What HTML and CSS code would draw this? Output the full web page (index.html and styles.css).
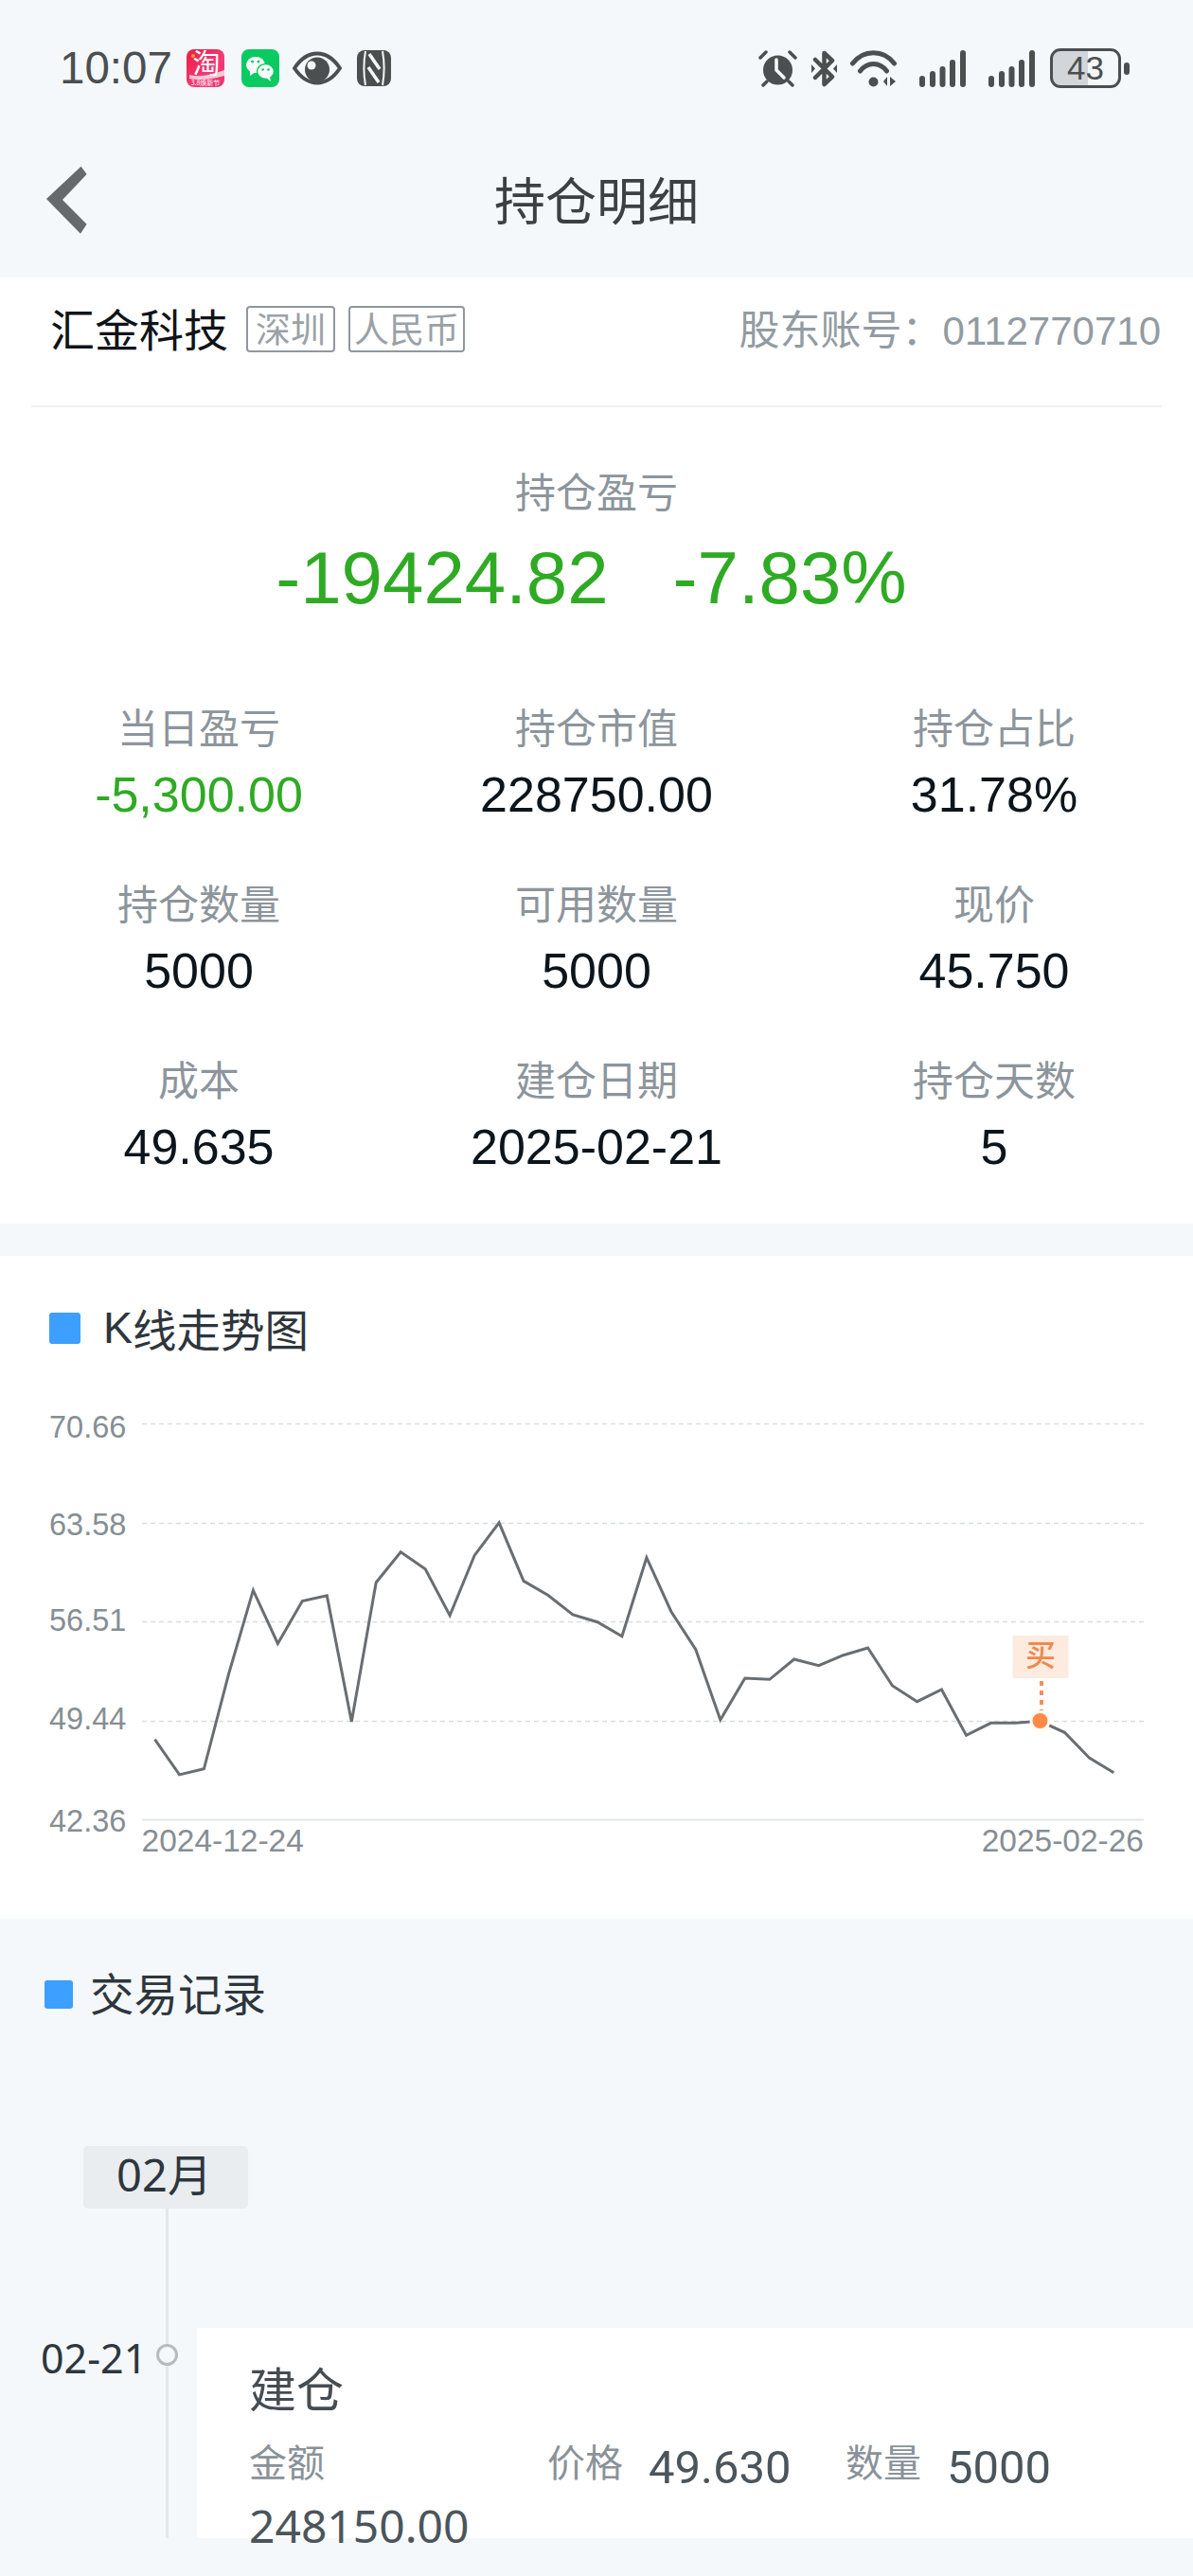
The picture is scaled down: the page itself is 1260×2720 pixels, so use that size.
FILE: index.html
```html
<!DOCTYPE html>
<html lang="zh-CN">
<head>
<meta charset="utf-8">
<title>持仓明细</title>
<link rel="stylesheet" href="styles.css">
</head>
<body>
<div class="page">
  <div class="status">
    <div class="status-left">
      <span class="time">10:07</span>
      <svg class="ic ic-tb" width="40" height="40" viewBox="0 0 40 40">
        <defs>
          <linearGradient id="tbg" x1="0" y1="0" x2="1" y2="1"><stop offset="0" stop-color="#EE1C3C"/><stop offset=".6" stop-color="#F23B78"/><stop offset="1" stop-color="#E93568"/></linearGradient>
        </defs>
        <rect width="40" height="40" rx="8" fill="url(#tbg)"/>
        <path d="M3 27 C14 30 26 27 40 22 V28 C26 32 14 33 3 31Z" fill="#F8C9D6"/>
        <circle cx="7" cy="7" r="2" fill="#F59A3A"/>
        <text class="tb-big" x="21" y="26" text-anchor="middle">淘</text>
        <text class="tb-small" x="20" y="38" text-anchor="middle">3.8焕新节</text>
      </svg>
      <svg class="ic ic-wx" width="40" height="40" viewBox="0 0 40 40">
        <rect width="40" height="40" rx="8" fill="#0ACB62"/>
        <ellipse cx="15" cy="16.500" rx="10" ry="8.500" fill="#fff"/>
        <path d="M9 22 L9 28 L15 24Z" fill="#fff"/>
        <ellipse cx="25.500" cy="23.500" rx="9" ry="8" fill="#fff" stroke="#0ACB62" stroke-width="1.500"/>
        <path d="M30 29 L31 34 L26 30Z" fill="#fff"/>
        <circle cx="11.500" cy="13" r="1.500" fill="#0ACB62"/><circle cx="18" cy="13" r="1.500" fill="#0ACB62"/>
        <circle cx="22.500" cy="21.500" r="1.300" fill="#0ACB62"/><circle cx="28.500" cy="21.500" r="1.300" fill="#0ACB62"/>
      </svg>
      <svg class="ic ic-eye" width="52" height="36" viewBox="0 0 52 36">
        <path d="M2 18 C10 6 18 2.500 26 2.500 S42 6 50 18 C42 30 34 33.500 26 33.500 S10 30 2 18Z" fill="none" stroke="#4B4F50" stroke-width="4"/>
        <circle cx="26" cy="19.500" r="13" fill="#4B4F50"/>
        <circle cx="20" cy="15" r="4.500" fill="#F4F8FB"/>
      </svg>
      <svg class="ic ic-nfc" width="36" height="38" viewBox="0 0 36 38">
        <rect width="36" height="38" rx="8" fill="#4B4F50"/>
        <path d="M9 1 C7 12 7 26 9 37 M27 1 C29 12 29 26 27 37" fill="none" stroke="#F4F8FB" stroke-width="2"/>
        <path d="M13 4 L24 20 M12 18 L23 34" fill="none" stroke="#F4F8FB" stroke-width="3.500"/>
      </svg>
    </div>
    <div class="status-right">
      <svg class="ic" width="41" height="39" viewBox="0 0 41 39">
        <circle cx="20.500" cy="21" r="15.500" fill="#4B4F50"/>
        <path d="M19 10 V21 L27 29" fill="none" stroke="#F4F8FB" stroke-width="3.600" stroke-linecap="round" stroke-linejoin="round"/>
        <path d="M2 8 L8 2 M33 2 L39 8 M5 37 L9 33 M36 37 L32 33" stroke="#4B4F50" stroke-width="3.500" stroke-linecap="round"/>
      </svg>
      <svg class="ic ic-bt" width="27" height="39" viewBox="0 0 27 39">
        <path d="M4 10 L22 28 L13.500 36 V3 L22 11 L4 29" fill="none" stroke="#4B4F50" stroke-width="4.500" stroke-linejoin="round" stroke-linecap="round"/>
        <path d="M0 15 L4 19.500 L0 24Z M27 15 L23 19.500 L27 24Z" fill="#4B4F50"/>
      </svg>
      <svg class="ic ic-wifi" width="49" height="39" viewBox="0 0 49 39">
        <path d="M2.500 14 C14 -1 35 -1 46.500 14 M10.500 22 C18 12 31 12 38.500 22" fill="none" stroke="#4B4F50" stroke-width="5" stroke-linecap="round"/>
        <circle cx="24.500" cy="33.500" r="5" fill="#4B4F50"/>
        <path d="M35 33 L39 28 V38Z M42 28 V38 L48 33Z" fill="#4B4F50"/>
      </svg>
      <svg class="ic ic-sig" width="49" height="39" viewBox="0 0 49 39">
        <rect x="0" y="27" width="6" height="12" rx="3" fill="#4B4F50"/>
        <rect x="11" y="22" width="6" height="17" rx="3" fill="#4B4F50"/>
        <rect x="21.500" y="17" width="6" height="22" rx="3" fill="#4B4F50"/>
        <rect x="32" y="10" width="6" height="29" rx="3" fill="#4B4F50"/>
        <rect x="43" y="0" width="6" height="39" rx="3" fill="#4B4F50"/>
      </svg>
      <svg class="ic ic-sig2" width="49" height="39" viewBox="0 0 49 39">
        <rect x="0" y="27" width="6" height="12" rx="3" fill="#4B4F50"/>
        <rect x="11" y="22" width="6" height="17" rx="3" fill="#4B4F50"/>
        <rect x="21.500" y="17" width="6" height="22" rx="3" fill="#4B4F50"/>
        <rect x="32" y="10" width="6" height="29" rx="3" fill="#4B4F50"/>
        <rect x="43" y="0" width="6" height="39" rx="3" fill="#4B4F50"/>
      </svg>
      <div class="battery">43</div>
      <div class="battery-nub"></div>
    </div>
  </div>

  <div class="nav">
    <svg class="back" width="43" height="72" viewBox="49 175 43 72">
      <polygon points="85.600,175.700 91.600,184 66,211 91.600,236.700 85,246.700 49,210" fill="#666A6C"/>
    </svg>
    <div class="nav-title">持仓明细</div>
  </div>

  <section class="info">
    <div class="head">
      <span class="name">汇金科技</span>
      <span class="tag">深圳</span>
      <span class="tag">人民币</span>
      <span class="account">股东账号：<span class="account-no">0112770710</span></span>
    </div>
    <div class="hero">
      <div class="label">持仓盈亏</div>
      <div class="hero-values"><span>-19424.82</span><span>-7.83%</span></div>
    </div>
    <div class="stats">
      <div class="stat"><div class="label">当日盈亏</div><div class="value value-down">-5,300.00</div></div>
      <div class="stat"><div class="label">持仓市值</div><div class="value">228750.00</div></div>
      <div class="stat"><div class="label">持仓占比</div><div class="value">31.78%</div></div>
      <div class="stat"><div class="label">持仓数量</div><div class="value">5000</div></div>
      <div class="stat"><div class="label">可用数量</div><div class="value">5000</div></div>
      <div class="stat"><div class="label">现价</div><div class="value">45.750</div></div>
      <div class="stat"><div class="label">成本</div><div class="value">49.635</div></div>
      <div class="stat"><div class="label">建仓日期</div><div class="value">2025-02-21</div></div>
      <div class="stat"><div class="label">持仓天数</div><div class="value">5</div></div>
    </div>
  </section>

  <section class="chart-card">
    <div class="section-title chart-title"><i class="mark mark-lg"></i><span class="title-k">K</span><span>线走势图</span></div>
    <svg class="chart" width="1260" height="566" viewBox="0 1460 1260 566">
      <g class="grid">
        <line x1="150" y1="1503.500" x2="1208" y2="1503.500"/>
        <line x1="150" y1="1608.500" x2="1208" y2="1608.500"/>
        <line x1="150" y1="1712.500" x2="1208" y2="1712.500"/>
        <line x1="150" y1="1817.500" x2="1208" y2="1817.500"/>
      </g>
      <line class="axis" x1="150" y1="1921.500" x2="1208" y2="1921.500"/>
      <g class="y-labels">
        <text x="52" y="1518">70.66</text>
        <text x="52" y="1621">63.58</text>
        <text x="52" y="1722">56.51</text>
        <text x="52" y="1826">49.44</text>
        <text x="52" y="1934">42.36</text>
      </g>
      <text class="x-label" x="149.500" y="1955">2024-12-24</text>
      <text class="x-label" x="1208" y="1955" text-anchor="end">2025-02-26</text>
      <polyline class="price" points="163.500,1836.700 189.500,1873.900 215.400,1867.800 241.400,1768 267.400,1679.200 293.400,1735.500 319.300,1690.600 345.300,1684.900 371.300,1818 397.200,1671 423.200,1638.800 449.200,1656.700 475.100,1705.700 501.100,1642.400 527.100,1607.800 553,1669.400 579,1684.500 605,1704.900 631,1712.700 656.900,1727.700 682.900,1644.700 708.900,1701.700 734.800,1741.700 760.800,1816 786.800,1772 812.800,1773.300 838.700,1752 864.700,1758.700 890.700,1747.700 916.600,1740 942.600,1780 968.600,1796.700 994.500,1784 1020.500,1832.300 1046.500,1819.300 1072.500,1819.300 1098.400,1817.300 1124.400,1829.300 1150.400,1856 1176.300,1871.700"/>
      <rect class="buy-box" x="1069.500" y="1727" width="59" height="45"/>
      <text class="buy-text" x="1099" y="1758.500" text-anchor="middle">买</text>
      <line class="buy-stem" x1="1100" y1="1775" x2="1100" y2="1806"/>
      <circle class="buy-dot" cx="1098.500" cy="1817" r="9.500"/>
    </svg>
  </section>

  <section class="trades">
    <div class="section-title trades-title"><i class="mark"></i><span>交易记录</span></div>
    <div class="month">02月</div>
    <div class="tl-row">
      <div class="tl-date">02-21</div>
      <div class="tl-axis"><i class="tl-dot"></i></div>
      <div class="trade-card">
        <div class="trade-type">建仓</div>
        <div class="trade-cols">
          <div class="trade-col trade-col-stack">
            <span class="trade-label">金额</span>
            <span class="trade-amount">248150.00</span>
          </div>
          <div class="trade-col">
            <span class="trade-label">价格</span>
            <span class="trade-num">49.630</span>
          </div>
          <div class="trade-col">
            <span class="trade-label">数量</span>
            <span class="trade-num">5000</span>
          </div>
        </div>
      </div>
    </div>
  </section>
</div>
</body>
</html>
```
FILE: styles.css
```css
* { box-sizing: border-box; }
html, body { margin: 0; padding: 0; }
body {
  background: #F4F8FB;
  font-family: "Noto Sans CJK SC", sans-serif;
  overflow: hidden;
}
.page { width: 1260px; height: 2720px; overflow: hidden; }
.ic { display: block; flex: none; }

/* status bar */
.status {
  height: 132px;
  padding: 12px 67px 0 63px;
  display: flex;
  align-items: center;
  justify-content: space-between;
}
.status-left, .status-right { display: flex; align-items: center; }
.time {
  font: 47.500px/60px "Liberation Sans", sans-serif;
  color: #4B4F50;
  white-space: nowrap;
}
.ic-tb { margin-left: 15px; overflow: visible; }
.ic-wx { margin-left: 18px; }
.ic-eye { margin-left: 14px; }
.ic-nfc { margin-left: 16px; }
.ic-bt { margin-left: 15px; }
.ic-wifi { margin-left: 14px; }
.ic-sig { margin-left: 24px; }
.ic-sig2 { margin-left: 24px; }
.battery {
  margin-left: 16px;
  width: 75px;
  height: 42px;
  border: 3.500px solid #4B4F50;
  border-radius: 11px;
  background: linear-gradient(90deg, #D2D6DA 0 53%, transparent 53%);
  font: 35px/35px "Liberation Sans", sans-serif;
  color: #4B4F50;
  text-align: center;
}
.battery-nub {
  margin-left: 3px;
  width: 6px;
  height: 13px;
  border-radius: 3px;
  background: #4B4F50;
}

/* nav */
.nav {
  height: 161px;
  position: relative;
  display: flex;
  align-items: center;
  justify-content: center;
}
.back { position: absolute; left: 49px; top: 43px; }
.nav-title {
  font-size: 54px;
  line-height: 70px;
  color: #3C4043;
  margin-top: -6px;
}

/* info card */
.info { background: #fff; height: 999px; }
.head {
  margin: 0 33px;
  height: 137px;
  padding: 0 1px 29px 20px;
  display: flex;
  align-items: center;
  border-bottom: 2px solid #EEF1F3;
}
.name { font-size: 47px; line-height: 60px; color: #0F1418; }
.tag {
  margin: 2px 0 0 14px;
  height: 49px;
  min-width: 94px;
  padding: 0 4px;
  border: 2px solid #8F979E;
  border-radius: 4px;
  text-align: center;
  font-size: 37px;
  line-height: 43px;
  color: #9AA1A7;
}
.name + .tag { margin-left: 19px; }
.account {
  margin: 2px 0 0 auto;
  font-size: 43px;
  line-height: 60px;
  color: #939BA2;
  white-space: nowrap;
}
.account-no { font-family: "Liberation Sans", sans-serif; font-size: 42px; }
.label {
  font-size: 43px;
  line-height: 50px;
  color: #8D959C;
}
.hero { margin-top: 62px; text-align: center; }
.hero-values {
  margin-top: 23px;
  padding-right: 11px;
  display: flex;
  justify-content: center;
  gap: 68px;
  font: 78px/90px "Liberation Sans", sans-serif;
  color: #2FAA24;
}
.stats {
  margin-top: 86px;
  display: grid;
  grid-template-columns: repeat(3, 420px);
  row-gap: 57px;
}
.stat { text-align: center; }
.value {
  margin-top: 18px;
  margin-bottom: 1px;
  font: 52px/60px "Liberation Sans", sans-serif;
  color: #0C151C;
}
.value-down { color: #2FAA24; }

/* shared section title */
.section-title {
  display: flex;
  align-items: center;
  font-size: 46.500px;
  line-height: 60px;
  color: #2E363C;
}
.mark {
  flex: none;
  width: 30px;
  height: 30px;
  border-radius: 3px;
  background: #3D9FFF;
}
.mark-lg { width: 33px; height: 33px; }

/* chart */
.chart-card {
  margin-top: 34px;
  height: 700px;
  background: #fff;
}
.chart-title {
  height: 134px;
  padding: 18px 0 0 52px;
}
.chart-title .mark { margin-right: 24px; }
.title-k { font-family: "Liberation Sans", sans-serif; }
.chart { display: block; }
.grid line { stroke: #DADDDF; stroke-width: 1.500; stroke-dasharray: 5 4; }
.axis { stroke: #E1E6E6; stroke-width: 2; }
.y-labels text { font: 32.500px "Liberation Sans", sans-serif; fill: #868E94; }
.x-label { font: 33.500px "Liberation Sans", sans-serif; fill: #868E94; }
.price { fill: none; stroke: #696E72; stroke-width: 3; stroke-linejoin: miter; }
.buy-box { fill: #FDEBE0; }
.buy-text { font: 500 32px "Noto Sans CJK SC", sans-serif; fill: #F0894D; }
.buy-stem { stroke: #EE9160; stroke-width: 4; stroke-dasharray: 5 5; }
.buy-dot { fill: #FF8A45; stroke: #FFF8F2; stroke-width: 3; }

/* trades */
.trades { height: 694px; }
.trades-title {
  height: 60px;
  margin-top: 47px;
  padding-left: 47px;
}
.trades-title .mark { margin: 5px 18px 0 0; }
.tb-big { font: 29px "Noto Sans CJK SC", sans-serif; fill: #fff; }
.tb-small { font: 7px "Noto Sans CJK SC", sans-serif; fill: #fff; }
.month {
  margin: 133px 0 0 88px;
  width: 174px;
  height: 66px;
  border-radius: 5px;
  background: #E9EDF0;
  padding-right: 3px;
  text-align: center;
  font-family: "Noto Sans", "Noto Sans CJK SC", sans-serif;
  font-size: 47px;
  line-height: 60px;
  color: #2E363C;
}
.tl-row { display: flex; height: 348px; }
.tl-date {
  flex: none;
  width: 131px;
  margin: 133px 0 0 43px;
  font-family: "Noto Sans", "Noto Sans CJK SC", sans-serif;
  font-size: 43px;
  line-height: 50px;
  color: #2E363C;
}
.tl-axis {
  flex: none;
  position: relative;
  width: 3px;
  margin-left: 1px;
  background: #E3E7EA;
}
.tl-dot {
  position: absolute;
  left: -10px;
  top: 143px;
  width: 23px;
  height: 23px;
  border: 3px solid #B5BBC0;
  border-radius: 50%;
  background: #F4F8FB;
}
.trade-card {
  flex: 1;
  margin: 126px 0 0 30px;
  height: 222px;
  padding: 32px 0 0 55px;
  background: #fff;
}
.trade-type {
  font-size: 50px;
  line-height: 60px;
  color: #454C52;
}
.trade-cols { display: flex; margin-top: 25px; }
.trade-col { width: 315px; display: flex; align-items: flex-start; }
.trade-col-stack { flex-direction: column; }
.trade-label { font-size: 40px; line-height: 46px; color: #8A9299; }
.trade-num {
  margin: 8px 0 0 27px;
  font: 49px/46px Roboto, sans-serif;
  color: #4B555C;
}
.trade-amount {
  margin-top: 23px;
  font: 48px/46px "Noto Sans", sans-serif;
  color: #4B555C;
}
```
